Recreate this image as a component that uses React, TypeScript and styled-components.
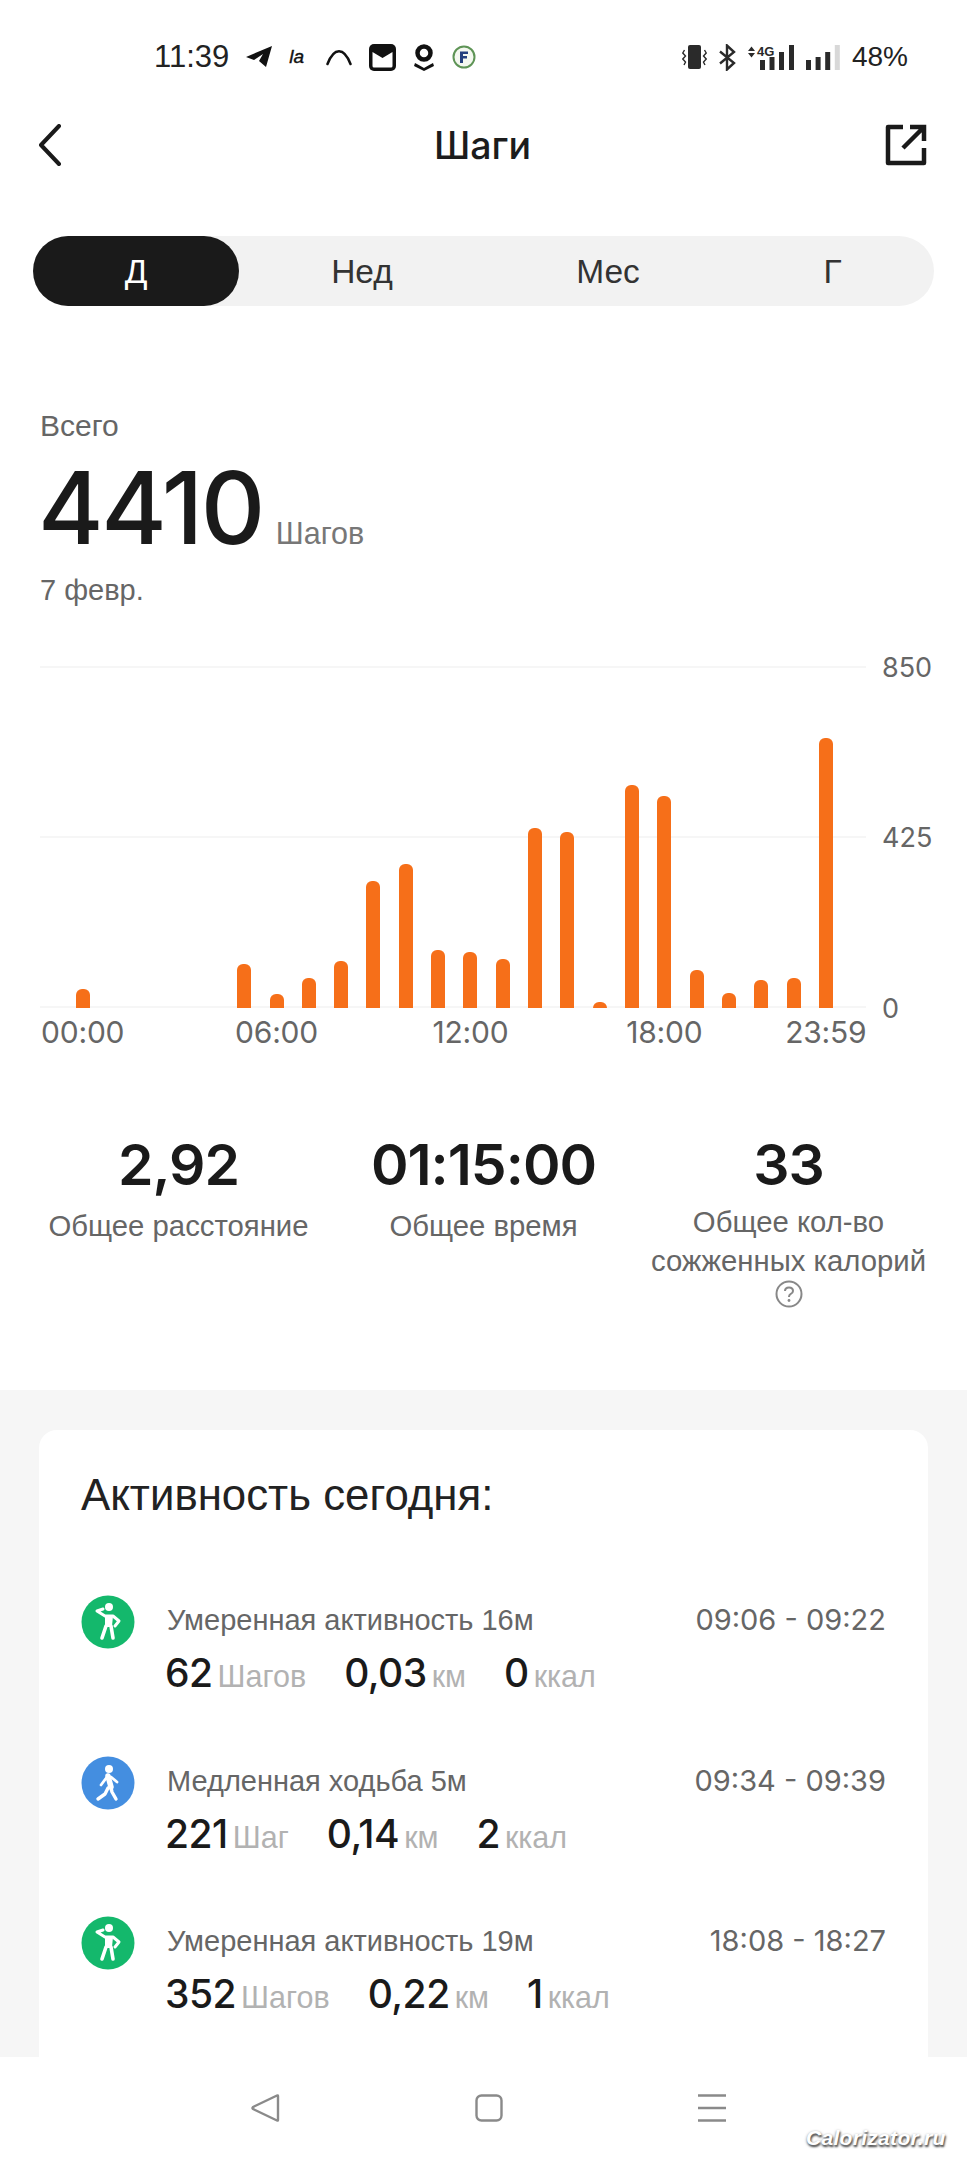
import styled, { createGlobalStyle } from "styled-components"

/**
 * Steps screen: status bar, day/week tabs, hourly chart, totals and today's activity list
 */

const GlobalStyle = createGlobalStyle`
   html, body {
      margin: 0;
      padding: 0;
      background: #fff;
   }
   * {
      box-sizing: border-box;
   }
`

const TEXT = '"Liberation Sans", Arial, sans-serif'
const NUM = 'Inter, "Liberation Sans", sans-serif'

const Page = styled.div`
   position: relative;
   width: 967px;
   height: 2160px;
   display: flex;
   flex-direction: column;
   overflow: hidden;
   font-family: ${TEXT};
   color: #1a1a1a;
   background: #fff;
`
const StatusBar = styled.div`
   height: 112px;
   flex: none;
   display: flex;
   align-items: center;
   justify-content: space-between;
   padding: 2px 59px 0 154px;
`
const StatusGroup = styled.div<{ $gap: number }>`
   display: flex;
   align-items: center;
   gap: ${p => p.$gap}px;
`
const StatusText = styled.span<{ $size: number }>`
   font-family: ${TEXT};
   font-size: ${p => p.$size}px;
   color: #222;
`
const CarrierMark = styled.span`
   font: italic 400 19px ${TEXT};
   -webkit-text-stroke: 0.4px #111;
   color: #111;
   width: 20px;
`
const Header = styled.div`
   height: 66px;
   flex: none;
   display: grid;
   grid-template-columns: 1fr auto 1fr;
   align-items: center;
   padding: 0 40px 0 38px;
`
const Title = styled.h1`
   margin: 0;
   font: 500 37.5px ${NUM};
   color: #1c1c1c;
`
const HeaderEnd = styled.div`
   justify-self: end;
   display: flex;
`
const Tabs = styled.div`
   flex: none;
   margin: 58px 33px 0;
   height: 70px;
   display: grid;
   grid-template-columns: 206px 246px 246px 203px;
   background: #f2f2f2;
   border-radius: 35px;
`
const Tab = styled.div<{ $active?: boolean }>`
   display: flex;
   align-items: center;
   justify-content: center;
   padding-top: 2px;
   font-size: 33.5px;
   border-radius: 35px;
   color: ${p => (p.$active ? "#fff" : "#333")};
   background: ${p => (p.$active ? "#1a1a1a" : "transparent")};
`
const Summary = styled.div`
   flex: none;
   padding: 100px 40px 0;
`
const SummaryLabel = styled.div`
   font-size: 30px;
   line-height: 40px;
   color: #666;
`
const TotalRow = styled.div`
   margin-top: 12px;
   margin-left: -2px;
   display: flex;
   align-items: baseline;
   gap: 13px;
   height: 100px;
   line-height: 100px;
`
const TotalValue = styled.span`
   font: 500 100px/100px ${NUM};
   letter-spacing: -2.5px;
   color: #1a1a1a;
`
const TotalUnit = styled.span`
   font-size: 30.5px;
   color: #777;
`
const DateLabel = styled.div`
   margin-top: 14px;
   font-size: 29px;
   line-height: 36px;
   color: #666;
`
const Chart = styled.div`
   flex: none;
   margin: 58px 0 0 40px;
   display: grid;
   grid-template-columns: 826px auto;
   column-gap: 16px;
`
const Plot = styled.div`
   height: 342px;
   display: grid;
   grid-template-columns: repeat(24, minmax(0, 1fr));
   align-items: end;
   padding: 0 24px 0 26.5px;
   background:
      linear-gradient(#f6f6f6, #f6f6f6) top / 100% 2px no-repeat,
      linear-gradient(#f6f6f6, #f6f6f6) center / 100% 2px no-repeat,
      linear-gradient(#f6f6f6, #f6f6f6) bottom / 100% 2px no-repeat;
`
const Bar = styled.div`
   justify-self: center;
   width: 14px;
   background: #f66f19;
   border-radius: 6px 6px 0 0;
`
const YAxis = styled.div`
   height: 342px;
   padding-top: 1px;
   display: flex;
   flex-direction: column;
   justify-content: space-between;
`
const Tick = styled.div`
   height: 0;
   display: flex;
   align-items: center;
   font: 400 27px ${NUM};
   color: #666;
`
const XAxis = styled.div`
   margin-top: 6px;
   height: 36px;
   display: grid;
   grid-template-columns: repeat(24, minmax(0, 1fr));
   padding: 0 24px 0 26.5px;
`
const XLabel = styled.div<{ $col: number }>`
   grid-column: ${p => p.$col + 1};
   display: flex;
   justify-content: center;
   white-space: nowrap;
   font: 400 30px/36px ${NUM};
   letter-spacing: -0.2px;
   color: #666;
`
const Totals = styled.div`
   flex: none;
   height: 257px;
   margin-top: 83px;
   padding-left: 26px;
   display: grid;
   grid-template-columns: repeat(3, 305px);
`
const TotalCell = styled.div`
   display: flex;
   flex-direction: column;
   align-items: center;
   text-align: center;
`
const CellValue = styled.div`
   font: 600 57px/64px ${NUM};
   letter-spacing: -1px;
   color: #1a1a1a;
`
const CellLabel = styled.div<{ $tight?: boolean }>`
   margin-top: ${p => (p.$tight ? 5 : 9)}px;
   font-size: 29.3px;
   line-height: 39px;
   color: #666;
`
const Activity = styled.div`
   flex: 1;
   min-height: 0;
   background: #f6f6f6;
   padding: 40px 39px 0;
`
const Card = styled.div`
   background: #fff;
   border-radius: 18px 18px 0 0;
   height: 800px;
   padding: 40px 42px 0;
`
const CardTitle = styled.h2`
   margin: 0 0 75px;
   font-weight: 400;
   font-size: 43.8px;
   line-height: 50px;
   color: #222;
`
const Row = styled.div`
   height: 160.5px;
   display: grid;
   grid-template-columns: 54px 1fr;
   column-gap: 32px;
`
const RowBody = styled.div`
   padding-top: 7px;
`
const RowTop = styled.div`
   display: flex;
   justify-content: space-between;
   font-size: 29px;
   line-height: 36px;
   color: #666;
`
const RowTime = styled.span`
   font: 400 29px/36px ${NUM};
`
const RowStats = styled.div`
   margin: 13px 0 0 -2px;
   display: flex;
   gap: 38px;
   line-height: 44px;
`
const Stat = styled.div`
   display: flex;
   align-items: baseline;
   gap: 5px;
`
const StatValue = styled.span`
   font: 500 39px/44px ${NUM};
   letter-spacing: -0.5px;
   color: #1a1a1a;
`
const StatUnit = styled.span`
   font-size: 30.5px;
   color: #b2b2b2;
`
const NavBar = styled.div`
   flex: none;
   height: 103px;
   background: #fff;
   display: flex;
   gap: 195px;
   padding: 37px 0 0 251px;
`
const Watermark = styled.div`
   position: absolute;
   left: 806px;
   top: 2126px;
   font: italic 700 21px ${TEXT};
   color: #fff;
   letter-spacing: 0.3px;
   text-shadow: 1px 2px 2px #555, 0 1px 3px #777;
`

const bars: [number, number][] = [
   [0, 19], [5, 44], [6, 14], [7, 30], [8, 47], [9, 127], [10, 144], [11, 58], [12, 56], [13, 49],
   [14, 180], [15, 176], [16, 6], [17, 223], [18, 212], [19, 38], [20, 15], [21, 28], [22, 30], [23, 270],
]

const activities = [
   {
      kind: "moderate", title: "Умеренная активность 16м", time: "09:06 - 09:22",
      stats: [["62", "Шагов"], ["0,03", "км"], ["0", "ккал"]],
   },
   {
      kind: "slow", title: "Медленная ходьба 5м", time: "09:34 - 09:39",
      stats: [["221", "Шаг"], ["0,14", "км"], ["2", "ккал"]],
   },
   {
      kind: "moderate", title: "Умеренная активность 19м", time: "18:08 - 18:27",
      stats: [["352", "Шагов"], ["0,22", "км"], ["1", "ккал"]],
   },
]

function Signal({ top, dim }: { top: number[]; dim?: boolean }) {
   return (
      <svg width="34" height="25" viewBox="0 0 34 25">
         {top.map((t, i) => (
            <rect key={i} x={i * 9.6} y={t} width="5" height={25 - t}
               fill={dim && i === 3 ? "#d8d8d8" : "#2a2a2a"} />
         ))}
      </svg>
   )
}

function ActivityIcon({ kind }: { kind: string }) {
   const moderate = kind === "moderate"
   return (
      <svg width="54" height="54" viewBox="0 0 54 54">
         <circle cx="27" cy="27" r="26.5" fill={moderate ? "#14b86c" : "#448ee0"} />
         <g stroke="#fff" strokeLinecap="round" strokeLinejoin="round" fill="none">
            {moderate ? (
               <>
                  <circle cx="28" cy="12" r="4" fill="#fff" stroke="none" />
                  <path d="M22 14 L16 16 L24 21 L32 21 L38 26 L34 31" strokeWidth="3" />
                  <path d="M25 21 H31 L30 31 H25 Z" fill="#fff" strokeWidth="2" />
                  <path d="M25 31 L21 43 M30 31 L32 43" strokeWidth="3.6" />
               </>
            ) : (
               <>
                  <circle cx="28" cy="13" r="4" fill="#fff" stroke="none" />
                  <path d="M27 20 L30 31" strokeWidth="5.5" />
                  <path d="M26 21 L20 29 M30 21 L36 26" strokeWidth="2.8" />
                  <path d="M27 32 L24 38 L17 43 M30 32 L31 36 L35 43" strokeWidth="3.4" />
               </>
            )}
         </g>
      </svg>
   )
}

export default function App() {
   return (
      <Page>
         <GlobalStyle />
         <StatusBar>
            <StatusGroup $gap={17}>
               <StatusText $size={31}>11:39</StatusText>
               <svg width="26" height="22" viewBox="0 0 26 22">
                  <path d="M0 11 L26 0 L20 21 L13 15 L17 8 L8 14 Z" fill="#111" />
               </svg>
               <CarrierMark>la</CarrierMark>
               <svg width="26" height="18" viewBox="0 0 26 18">
                  <path d="M1.5 16 C8 -1 18 -1 24.5 16" fill="none" stroke="#111" strokeWidth="2.5" strokeLinecap="round" />
               </svg>
               <svg width="27" height="27" viewBox="0 0 27 27">
                  <rect width="27" height="27" rx="5" fill="#111" />
                  <path d="M3.5 8 L13.5 14 L23.5 8 V22 Q23.5 23.5 22 23.5 H5 Q3.5 23.5 3.5 22 Z" fill="#fff" />
               </svg>
               <svg width="22" height="27" viewBox="0 0 22 27">
                  <circle cx="11" cy="9" r="6.5" fill="none" stroke="#111" strokeWidth="4.5" />
                  <path d="M2 19 Q6 21 11 24 Q16 21 20 19 L21 22 L11 27 L1 22 Z" fill="#111" />
               </svg>
               <svg width="24" height="24" viewBox="0 0 24 24">
                  <circle cx="12" cy="12" r="10.5" fill="#f4f8f0" stroke="#5e9456" strokeWidth="2" />
                  <path d="M8 6.5 H16 V9 H11 V11 H15 V13.5 H11 V18 H8 Z" fill="#24407e" />
               </svg>
            </StatusGroup>
            <StatusGroup $gap={12}>
               <svg width="25" height="24" viewBox="0 0 25 24">
                  <rect x="6" y="0" width="13" height="24" rx="2" fill="#2a2a2a" />
                  <path d="M2.5 5 L0.8 8 L3.5 11 L0.8 14 L3.5 17 L2 20 M22.5 5 L24.2 8 L21.5 11 L24.2 14 L21.5 17 L23 20" fill="none" stroke="#2a2a2a" strokeWidth="1.4" />
               </svg>
               <svg width="17" height="27" viewBox="0 0 17 27">
                  <path d="M1 7.5 L15 19 L8 25.5 V1.5 L15 8 L1 19.5" fill="none" stroke="#2a2a2a" strokeWidth="2.4" />
               </svg>
               <svg width="46" height="25" viewBox="0 0 46 25">
                  <path d="M0 6 L3.5 1.5 L7 6 Z M0 8 H7 L3.5 12.5 Z" fill="#2a2a2a" />
                  <text x="9" y="11" fontFamily="Liberation Sans, sans-serif" fontWeight="700" fontSize="13" fill="#2a2a2a">4G</text>
                  <rect x="12" y="15" width="5" height="10" fill="#2a2a2a" />
                  <rect x="21.5" y="12" width="5" height="13" fill="#2a2a2a" />
                  <rect x="31" y="7" width="5" height="18" fill="#2a2a2a" />
                  <rect x="41" y="0" width="5" height="25" fill="#2a2a2a" />
               </svg>
               <Signal top={[15, 12, 7, 0]} dim />
               <StatusText $size={28}>48%</StatusText>
            </StatusGroup>
         </StatusBar>

         <Header>
            <svg width="24" height="42" viewBox="0 0 24 42">
               <path d="M21 2 L3 21 L21 40" fill="none" stroke="#1a1a1a" strokeWidth="4" strokeLinecap="round" strokeLinejoin="round" />
            </svg>
            <Title>Шаги</Title>
            <HeaderEnd>
               <svg width="42" height="42" viewBox="0 0 42 42">
                  <path d="M18 3 H3 V39 H39 V24" fill="none" stroke="#1a1a1a" strokeWidth="4.5" strokeLinejoin="round" />
                  <path d="M18 24 L38 4 M25 3 H39 V17" fill="none" stroke="#1a1a1a" strokeWidth="4.5" />
               </svg>
            </HeaderEnd>
         </Header>

         <Tabs>
            <Tab $active>Д</Tab>
            <Tab>Нед</Tab>
            <Tab>Мес</Tab>
            <Tab>Г</Tab>
         </Tabs>

         <Summary>
            <SummaryLabel>Всего</SummaryLabel>
            <TotalRow>
               <TotalValue>4410</TotalValue>
               <TotalUnit>Шагов</TotalUnit>
            </TotalRow>
            <DateLabel>7 февр.</DateLabel>
         </Summary>

         <Chart>
            <Plot>
               {bars.map(([hour, height]) => (
                  <Bar key={hour} style={{ gridColumn: hour + 1, height }} />
               ))}
            </Plot>
            <YAxis>
               <Tick>850</Tick>
               <Tick>425</Tick>
               <Tick>0</Tick>
            </YAxis>
            <XAxis>
               <XLabel $col={0}>00:00</XLabel>
               <XLabel $col={6}>06:00</XLabel>
               <XLabel $col={12}>12:00</XLabel>
               <XLabel $col={18}>18:00</XLabel>
               <XLabel $col={23}>23:59</XLabel>
            </XAxis>
         </Chart>

         <Totals>
            <TotalCell>
               <CellValue>2,92</CellValue>
               <CellLabel>Общее расстояние</CellLabel>
            </TotalCell>
            <TotalCell>
               <CellValue>01:15:00</CellValue>
               <CellLabel>Общее время</CellLabel>
            </TotalCell>
            <TotalCell>
               <CellValue>33</CellValue>
               <CellLabel $tight>Общее кол-во<br />сожженных калорий</CellLabel>
               <svg width="28" height="28" viewBox="0 0 28 28">
                  <circle cx="14" cy="14" r="12.5" fill="none" stroke="#888" strokeWidth="2" />
                  <path d="M10 11 Q10 7.5 14 7.5 Q18 7.5 18 11 Q18 13 15.5 14.2 Q14 15 14 17" fill="none" stroke="#888" strokeWidth="2" />
                  <circle cx="14" cy="20.5" r="1.4" fill="#888" />
               </svg>
            </TotalCell>
         </Totals>

         <Activity>
            <Card>
               <CardTitle>Активность сегодня:</CardTitle>
               {activities.map(item => (
                  <Row key={item.time}>
                     <ActivityIcon kind={item.kind} />
                     <RowBody>
                        <RowTop>
                           <span>{item.title}</span>
                           <RowTime>{item.time}</RowTime>
                        </RowTop>
                        <RowStats>
                           {item.stats.map(([value, unit]) => (
                              <Stat key={unit}>
                                 <StatValue>{value}</StatValue>
                                 <StatUnit>{unit}</StatUnit>
                              </Stat>
                           ))}
                        </RowStats>
                     </RowBody>
                  </Row>
               ))}
            </Card>
         </Activity>

         <NavBar>
            <svg width="29" height="28" viewBox="0 0 29 28">
               <path d="M27 2 Q27 1 26 1.5 L2 13 Q1 14 2 15 L26 26.5 Q27 27 27 26 Z" fill="none" stroke="#8a8a8a" strokeWidth="2.4" strokeLinejoin="round" />
            </svg>
            <svg width="28" height="28" viewBox="0 0 28 28">
               <rect x="1.5" y="1.5" width="25" height="25" rx="5" fill="none" stroke="#8a8a8a" strokeWidth="2.4" />
            </svg>
            <svg width="28" height="28" viewBox="0 0 28 28">
               <path d="M0 1.5 H28 M0 14 H28 M0 26.5 H28" stroke="#8a8a8a" strokeWidth="2.4" />
            </svg>
         </NavBar>
         <Watermark>Calorizator.ru</Watermark>
      </Page>
   )
}
